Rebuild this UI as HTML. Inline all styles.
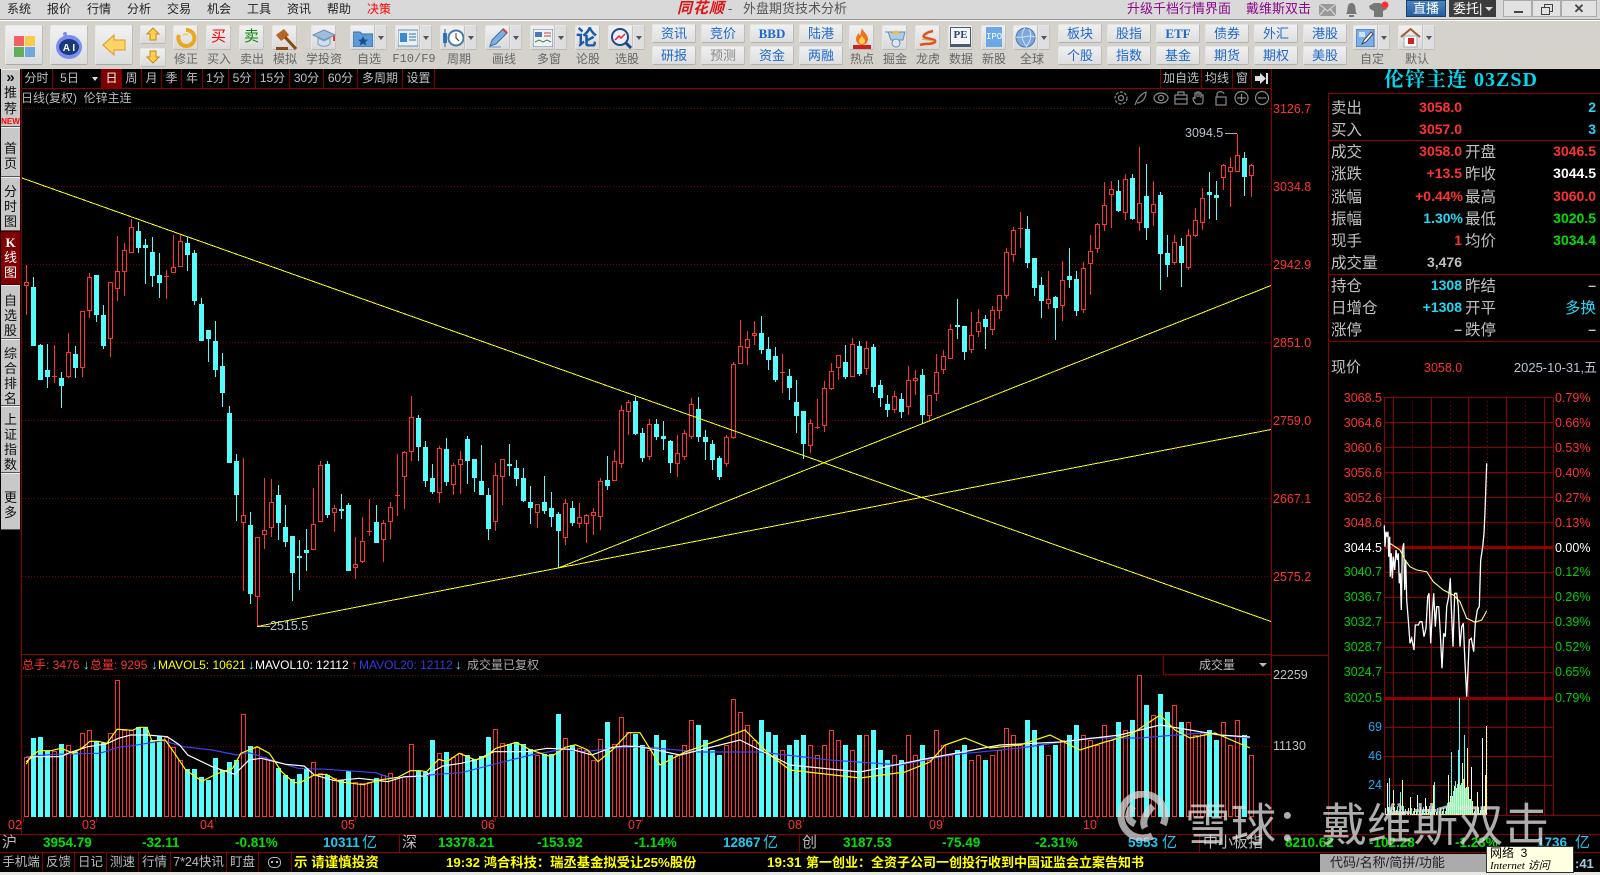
<!DOCTYPE html>
<html lang="zh"><head><meta charset="utf-8"><title>同花顺 - 外盘期货技术分析</title>
<style>
html,body{margin:0;padding:0;background:#000;overflow:hidden}
#r{position:relative;width:1600px;height:875px;overflow:hidden;background:#000;font:12px "Liberation Sans","WenQuanYi Zen Hei","Noto Sans CJK SC",sans-serif;color:#c0c0c0}
#r div,#r span,#r svg{position:absolute;white-space:nowrap}
.t{line-height:16px;height:16px}
.m{top:1px;color:#222;font-size:12px}
.l{top:51px;color:#666;font-size:12px;transform:translateX(-50%)}
.b{top:25px;height:25px;width:25px;box-sizing:border-box;background:linear-gradient(#f1f1f1,#dadada);border:1px solid #e6e6e6;border-bottom:1px solid #b8b8b8;border-right:1px solid #c4c4c4;border-radius:2px}
.d{top:25px;height:25px;width:12px;box-sizing:border-box;background:#dedede;border:1px solid #e6e6e6;border-bottom:1px solid #b8b8b8;border-right:1px solid #c4c4c4}
.d:after{content:"";position:absolute;left:2px;top:10px;border:3.5px solid transparent;border-top:4px solid #555}
.B{top:25px;height:40px;width:38px;box-sizing:border-box;background:linear-gradient(#f2f2f2,#dcdcdc);border:1px solid #e8e8e8;border-bottom:1px solid #aaa;border-right:1px solid #bbb;border-radius:2px}
.x{height:19px;width:44px;box-sizing:border-box;background:linear-gradient(#f0f0f0,#dedede);border:1px solid #e4e4e4;border-bottom:1px solid #b0b0b0;border-right:1px solid #bbb;border-radius:2px;color:#1c68cc;font-size:13px;line-height:17px;text-align:center}
.c{top:69px;height:19px;border-right:1px solid #800000;color:#c0c0c0;text-align:center;line-height:19px;font-size:12px;box-sizing:border-box}
.s{left:1px;width:19px;background:#c8c8c8;color:#111;text-align:center;font-size:13px;line-height:15px;white-space:normal!important;box-sizing:border-box;border-bottom:1px solid #555;border-top:1px solid #eee}
.a{color:#ff3232;font-size:12.5px;line-height:14px;height:14px}
.p{font-size:15.5px;color:#c0c0c0;line-height:18px;height:18px;letter-spacing:0;transform:translateY(2px)}
.v{font-size:14px;font-weight:bold;line-height:18px;height:18px;text-align:right}
.q{font-size:12.5px;line-height:14px;height:14px}
.n{top:835px;font-size:13.5px;font-weight:bold;color:#00e000;line-height:16px;height:16px}
.y{top:835px;font-size:13.5px;font-weight:bold;color:#1fc8f0;line-height:16px;height:16px}
.f{top:853px;height:19px;border-right:1px solid #800000;color:#bbb;font-size:12.5px;line-height:19px;text-align:center;box-sizing:border-box}
.k{top:854px;color:#ff0;font-size:13.5px;font-weight:bold;line-height:17px}
.h{top:657px;line-height:16px;font-size:12px}
.h.u{font-weight:bold;font-size:13px}
</style></head><body><div id="r">

<!-- title bar -->
<div style="left:0;top:0;width:1600px;height:19px;background:#d9d9d9"></div>
<div style="left:0;top:19px;width:1600px;height:1px;background:#8f8f8f"></div>
<div style="left:0;top:20px;width:1600px;height:49px;background:#d5d2cb;border-top:1px solid #fff;box-sizing:border-box"></div>
<span class="t m" style="left:7px">系统</span><span class="t m" style="left:47px">报价</span><span class="t m" style="left:87px">行情</span><span class="t m" style="left:127px">分析</span><span class="t m" style="left:167px">交易</span><span class="t m" style="left:207px">机会</span><span class="t m" style="left:247px">工具</span><span class="t m" style="left:287px">资讯</span><span class="t m" style="left:327px">帮助</span><span class="t m" style="left:367px;color:#f00">决策</span>
<span class="t" style="left:677px;top:1px;color:#e01212;font-size:15px;font-weight:bold;font-style:italic;letter-spacing:1px">同花顺</span>
<span class="t" style="left:728px;top:1px;color:#555;font-size:13px">-</span>
<span class="t" style="left:743px;top:1px;color:#555;font-size:13px">外盘期货技术分析</span>
<span class="t" style="left:1127px;top:1px;color:#8a0a8a;font-size:13px">升级千档行情界面</span>
<span class="t" style="left:1246px;top:1px;color:#8a0a8a;font-size:13px">戴维斯双击</span>
<svg style="left:1319px;top:1px" width="72" height="16"><rect x="0" y="3" width="17" height="12" fill="#999"/><path d="M0 3L8.500 10L17 3M0 15L6 8M17 15L11 8" stroke="#ddd" fill="none"/><path d="M27 13c2-2 1-6 2-8c1-4 6-4 7 0c1 2 0 6 2 8z M30 14h5v2h-5z" fill="#777"/><path d="M50 5l5-3h6l5 3l2 3l-4 2v6H55v-6l-4-2z" fill="#777"/><circle cx="66" cy="4" r="3.500" fill="#f33"/></svg>
<div style="left:1406px;top:0;width:40px;height:17px;background:linear-gradient(#4f86bd,#235d9c);border:1px solid #1a3f6a;box-sizing:border-box;color:#fff;text-align:center;font-size:13px;line-height:15px">直播</div>
<div style="left:1449px;top:0;width:47px;height:17px;background:#3c3c3c;box-sizing:border-box;color:#fff;font-size:13px;line-height:17px;padding-left:4px">委托 <span style="left:30px;top:0">|</span><span style="left:36px;top:7px;border:4px solid transparent;border-top:4px solid #ddd"></span></div>
<div style="left:1503px;top:0;width:29px;height:17px;background:#e2e2e2;border:1px solid #aaa;box-sizing:border-box"><span style="left:10px;top:10px;width:9px;height:2px;background:#444"></span></div>
<div style="left:1532px;top:0;width:29px;height:17px;background:#e2e2e2;border:1px solid #aaa;box-sizing:border-box"><span style="left:11px;top:3px;width:7px;height:6px;border:1px solid #444"></span><span style="left:8px;top:6px;width:7px;height:6px;border:1px solid #444;background:#e2e2e2"></span></div>
<div style="left:1561px;top:0;width:36px;height:17px;background:#e2e2e2;border:1px solid #aaa;box-sizing:border-box;color:#444;text-align:center;line-height:15px;font-weight:bold;font-size:13px">✕</div>

<!-- toolbar -->
<div class="B" style="left:5px"></div>
<svg style="left:14px;top:36px" width="21" height="21"><rect x="0" y="0" width="10" height="10" fill="#f26060"/><rect x="11" y="0" width="10" height="10" fill="#f8cc4a"/><rect x="0" y="11" width="10" height="10" fill="#5fae5a"/><rect x="11" y="11" width="10" height="10" fill="#6fa8dc"/></svg>
<div class="B" style="left:50px"></div>
<svg style="left:54px;top:30px" width="30" height="30"><ellipse cx="15" cy="17" rx="13" ry="12" fill="#7a8df0"/><ellipse cx="15" cy="17" rx="10" ry="8" fill="#1d3a78"/><circle cx="11" cy="4" r="2" fill="#7a8df0"/><text x="15" y="21" fill="#fff" font-size="10" font-weight="bold" text-anchor="middle" font-family="Liberation Sans">A I</text></svg>
<div class="B" style="left:95px"></div>
<svg style="left:102px;top:33px" width="24" height="24"><path d="M1 12L12 2V7H23V17H12V22Z" fill="#ffd466" stroke="#d89a20"/></svg>
<div class="b" style="left:140px;width:26px;height:19px"></div>
<svg style="left:146px;top:27px" width="14" height="14"><path d="M7 1L13 7H10V13H4V7H1Z" fill="#ffd050" stroke="#c88a10"/></svg>
<div class="b" style="left:140px;top:48px;width:26px;height:19px"></div>
<svg style="left:146px;top:50px" width="14" height="14"><path d="M7 13L13 7H10V1H4V7H1Z" fill="#ffd050" stroke="#c88a10"/></svg>

<div class="b" style="left:173px"></div><svg style="left:175px;top:27px" width="22" height="22"><path d="M11 3a8 8 0 1 1-7 5" fill="none" stroke="#e8a820" stroke-width="4"/><path d="M8 8a4 4 0 0 1 5 0" fill="none" stroke="#f4cf70" stroke-width="2"/></svg><span class="l t" style="left:186px">修正</span>
<div class="b" style="left:206px"></div><span class="t" style="left:211px;top:29px;color:#f00;font-size:15px;line-height:16px">买</span><span class="l t" style="left:219px">买入</span>
<div class="b" style="left:239px"></div><span class="t" style="left:244px;top:29px;color:#0a8a0a;font-size:15px;line-height:16px">卖</span><span class="l t" style="left:252px">卖出</span>
<div class="b" style="left:272px"></div><svg style="left:274px;top:27px" width="24" height="24"><path d="M2 8l8-6l5 6l-8 6z" fill="#b5651d"/><path d="M11 10l11 12" stroke="#8a4a12" stroke-width="3"/><rect x="2" y="20" width="12" height="3" fill="#8a4a12"/></svg><span class="l t" style="left:285px">模拟</span>
<div class="b" style="left:311px"></div><svg style="left:312px;top:29px" width="24" height="20"><path d="M12 1L23 6L12 11L1 6Z" fill="#9dbfdc" stroke="#6b8eac"/><path d="M6 9v6c3 3 9 3 12 0V9l-6 3z" fill="#cfe0ee" stroke="#7d9cba"/><rect x="21" y="7" width="2" height="5" fill="#e33"/></svg><span class="l t" style="left:324px">学投资</span>
<div class="b" style="left:350px"></div><div class="d" style="left:375px"></div><svg style="left:353px;top:29px" width="20" height="18"><path d="M0 3h7l2 2h11v13H0z" fill="#5b9bd9" stroke="#3a6ea5"/><path d="M10 7l1.5 3.5l3.5.3l-2.7 2.2l1 3.4l-3.3-1.9l-3.3 1.9l1-3.4L5 10.800l3.500-.3z" fill="#1e4a8a"/></svg><span class="l t" style="left:369px">自选</span>
<div class="b" style="left:395px"></div><div class="d" style="left:420px"></div><svg style="left:398px;top:29px" width="20" height="18"><rect x="0" y="1" width="20" height="16" fill="#e8f0f8" stroke="#6b8eac"/><rect x="2" y="4" width="7" height="9" fill="#3a8ad0"/><path d="M11 5h7M11 8h7M11 11h7" stroke="#3a6ea5"/></svg><span class="l t" style="left:414px;font-family:'Liberation Mono'">F10/F9</span>
<div class="b" style="left:440px"></div><div class="d" style="left:465px"></div><svg style="left:442px;top:27px" width="22" height="22"><rect x="1" y="6" width="4" height="10" fill="#2a7fd0"/><path d="M3 2v18" stroke="#2a5a90"/><circle cx="14" cy="11" r="7.500" fill="#fff" stroke="#4a7aa8" stroke-width="2"/><path d="M14 6v5l3 3" stroke="#333" fill="none"/></svg><span class="l t" style="left:459px">周期</span>
<div class="b" style="left:485px"></div><div class="d" style="left:510px"></div><svg style="left:487px;top:27px" width="22" height="22"><path d="M3 19l2-6L16 2l4 4L9 17z" fill="#7db0e0" stroke="#3a6ea5"/><path d="M16 2l4 4" stroke="#e33" stroke-width="2"/><path d="M2 20h12" stroke="#5a9ad0"/></svg><span class="l t" style="left:504px">画线</span>
<div class="b" style="left:530px"></div><div class="d" style="left:555px"></div><svg style="left:533px;top:29px" width="20" height="18"><rect x="0" y="0" width="20" height="18" fill="#eef2f8" stroke="#5a7a9a"/><rect x="2" y="3" width="7" height="5" fill="#4a7ab0"/><path d="M11 4h7M11 7h7" stroke="#c44"/><path d="M2 13l4-2l4 2l4-2l4 2" stroke="#3a8a3a" fill="none"/></svg><span class="l t" style="left:549px">多窗</span>
<div class="b" style="left:575px"></div><span class="t" style="left:576px;top:29px;color:#1a5aa8;font-size:21px;font-weight:bold;line-height:19px">论</span><span class="l t" style="left:588px">论股</span>
<div class="b" style="left:608px"></div><div class="d" style="left:633px"></div><svg style="left:610px;top:27px" width="22" height="22"><circle cx="10" cy="10" r="8" fill="#eef" stroke="#1e4a8a" stroke-width="2"/><path d="M15 15l6 6" stroke="#1e4a8a" stroke-width="3"/><path d="M5 13l4-4l2 2l4-4" stroke="#e22" stroke-width="1.500" fill="none"/></svg><span class="l t" style="left:627px">选股</span>

<div class="x" style="left:652px;top:24px">资讯</div><div class="x" style="left:652px;top:46px">研报</div>
<div class="x" style="left:701px;top:24px">竞价</div><div class="x" style="left:701px;top:46px;color:#888">预测</div>
<div class="x" style="left:750px;top:24px;font-weight:bold;font-family:'Liberation Serif'">BBD</div><div class="x" style="left:750px;top:46px">资金</div>
<div class="x" style="left:799px;top:24px">陆港</div><div class="x" style="left:799px;top:46px">两融</div>

<div class="b" style="left:849px"></div><svg style="left:852px;top:27px" width="20" height="22"><path d="M10 1c1 4 6 6 6 11a6 6 0 0 1-12 0c0-3 2-4 2-6c1 1 2 2 2 3c1-3 1-5 2-8z" fill="#f07020"/><path d="M10 8c0 3 3 3 3 6a3 3 0 0 1-6 0c0-3 3-3 3-6z" fill="#ffd050"/><rect x="1" y="18" width="18" height="4" fill="#c22"/></svg><span class="l t" style="left:862px">热点</span>
<div class="b" style="left:882px"></div><svg style="left:884px;top:29px" width="22" height="20"><path d="M1 3h3l3 8h12l2-8z" fill="#b0ccea" stroke="#6b8eac"/><path d="M7 5l5-4l5 4z" fill="#f0c040"/><circle cx="12" cy="14" r="4" fill="#dde8f4" stroke="#6b8eac"/></svg><span class="l t" style="left:895px">掘金</span>
<div class="b" style="left:915px"></div><svg style="left:917px;top:28px" width="22" height="20"><path d="M3 17c5-2 12 0 15-3c2-3-8-3-11-5c-2-2 4-5 9-6" fill="none" stroke="#d9541e" stroke-width="2.500"/><path d="M5 11c3 1 8 1 12 2" fill="none" stroke="#f0a030"/></svg><span class="l t" style="left:928px">龙虎</span>
<div class="b" style="left:948px"></div><div style="left:950px;top:27px;width:21px;height:20px;background:#f4f6f8;border:1px solid #4a5a70;border-bottom:3px solid #4a5a70;box-sizing:border-box;color:#2c4a70;font:bold 11px 'Liberation Serif';line-height:15px;text-align:center">PE</div><span class="l t" style="left:961px">数据</span>
<div class="b" style="left:981px"></div><div style="left:986px;top:27px;width:16px;height:20px;background:#6aa8ea;box-sizing:border-box;color:#fff;font:9px 'Liberation Mono';line-height:20px;text-align:center">IPO</div><span class="l t" style="left:994px">新股</span>
<div class="b" style="left:1013px"></div><div class="d" style="left:1038px"></div><svg style="left:1015px;top:27px" width="21" height="21"><circle cx="10.500" cy="10.500" r="9.500" fill="#7ea8dc" stroke="#4a78b0"/><path d="M1 10c6 2 12-3 19 0M10 1c-5 6-3 13 2 19M14 2c3 5 2 12-3 18" stroke="#d0e0f4" fill="none"/></svg><span class="l t" style="left:1032px">全球</span>

<div class="x" style="left:1058px;top:24px">板块</div><div class="x" style="left:1058px;top:46px">个股</div>
<div class="x" style="left:1107px;top:24px">股指</div><div class="x" style="left:1107px;top:46px">指数</div>
<div class="x" style="left:1156px;top:24px;font-weight:bold;font-family:'Liberation Serif'">ETF</div><div class="x" style="left:1156px;top:46px">基金</div>
<div class="x" style="left:1205px;top:24px">债券</div><div class="x" style="left:1205px;top:46px">期货</div>
<div class="x" style="left:1254px;top:24px">外汇</div><div class="x" style="left:1254px;top:46px">期权</div>
<div class="x" style="left:1303px;top:24px">港股</div><div class="x" style="left:1303px;top:46px">美股</div>

<div class="b" style="left:1353px"></div><div class="d" style="left:1378px"></div><svg style="left:1356px;top:29px" width="19" height="18"><rect x="0" y="0" width="18" height="18" fill="#7db0e8" stroke="#3a6ea5"/><rect x="3" y="3" width="6" height="5" fill="#d0e2f6"/><path d="M6 15l2-4l7-8l2 2l-7 8z" fill="#fff" stroke="#445"/></svg><span class="l t" style="left:1372px">自定</span>
<div class="b" style="left:1398px"></div><div class="d" style="left:1423px"></div><svg style="left:1400px;top:27px" width="21" height="21"><path d="M1 10L10.500 2L20 10" fill="none" stroke="#9a5a3a" stroke-width="2"/><rect x="4" y="9" width="13" height="11" fill="#f8f8f8" stroke="#aaa"/><rect x="8" y="11" width="6" height="6" fill="#c22"/></svg><span class="l t" style="left:1417px">默认</span>

<!-- sidebar -->
<div class="s" style="top:69px;height:58px;font-size:13px;line-height:16px"><b style="font-size:15px;line-height:15px;display:block">»</b>推<br>荐<br><b style="font-size:8px;color:#f00;line-height:9px;display:block">NEW</b></div>
<div class="s" style="top:127px;height:50px;padding-top:13px">首<br>页</div>
<div class="s" style="top:177px;height:54px;padding-top:6px;line-height:15px">分<br>时<br>图</div>
<div class="s" style="top:231px;height:54px;padding-top:3px;background:#800000;color:#fff;border-color:#400"><b style="font-family:'Liberation Serif'">K</b><br>线<br>图</div>
<div class="s" style="top:285px;height:54px;padding-top:7px">自<br>选<br>股</div>
<div class="s" style="top:339px;height:67px;padding-top:6px">综<br>合<br>排<br>名</div>
<div class="s" style="top:406px;height:67px;padding-top:5px">上<br>证<br>指<br>数</div>
<div class="s" style="top:473px;height:57px;padding-top:16px">更<br>多</div>

<!-- period tabs -->
<div class="c" style="left:21px;width:32px">分时</div>
<div class="c" style="left:53px;width:49px;padding-right:15px">5日<span style="left:39px;top:8px;border:3.500px solid transparent;border-top:4px solid #ddd"></span></div>
<div class="c" style="left:102px;width:20px;background:#800000;color:#fff">日</div>
<div class="c" style="left:122px;width:20px">周</div><div class="c" style="left:142px;width:20px">月</div><div class="c" style="left:162px;width:20px">季</div><div class="c" style="left:182px;width:21px">年</div>
<div class="c" style="left:203px;width:26px">1分</div><div class="c" style="left:229px;width:27px">5分</div><div class="c" style="left:256px;width:34px">15分</div><div class="c" style="left:290px;width:34px">30分</div><div class="c" style="left:324px;width:34px">60分</div><div class="c" style="left:358px;width:45px">多周期</div><div class="c" style="left:403px;width:32px">设置</div>
<div class="c" style="left:1160px;width:42px;border-left:1px solid #800000">加自选</div><div class="c" style="left:1202px;width:31px">均线</div><div class="c" style="left:1233px;width:19px">窗</div>
<div class="c" style="left:1252px;width:20px"></div>
<svg style="left:1254px;top:73px" width="15" height="11"><path d="M1 3h5V0l6 5.500l-6 5.500V8H1z" fill="#ddd"/><rect x="12" y="0" width="2" height="11" fill="#ddd"/></svg>
<span class="t" style="left:21px;top:90px;color:#bbb">日线(复权)&nbsp; 伦锌主连</span>

<!-- chart svg -->
<svg id="g" style="left:0;top:0" width="1600" height="875" viewBox="0 0 1600 875"></svg>

<svg style="left:1114px;top:90px" width="156" height="16" fill="none" stroke="#8a8a8a" stroke-width="1.200"><circle cx="7" cy="8" r="2.500"/><circle cx="7" cy="8" r="6" stroke-dasharray="3 1.500"/><path d="M21 15c2-6 6-11 11-13c0 6-4 11-9 11"/><ellipse cx="47" cy="8" rx="7" ry="5"/><circle cx="47" cy="8" r="2.500"/><rect x="61" y="5" width="12" height="9"/><path d="M64 5V2h6v3M61 9h12"/><path d="M82 14c-2-2-3-4-3-6c1-1 2 0 2 1V3h2v4V2h2v5V3h2v5V5h2v6c0 2-1 3-2 3z"/><rect x="102" y="7" width="10" height="8"/><path d="M103 7V4c0-3 7-3 7 0"/><circle cx="127.500" cy="8" r="6.500"/><path d="M123 8h9M127.500 4v8"/><circle cx="148" cy="8" r="6.500"/><path d="M144 8h8"/></svg>

<!-- main axis labels -->
<span class="a" style="left:1273px;top:102px">3126.7</span><span class="a" style="left:1273px;top:180px">3034.8</span><span class="a" style="left:1273px;top:258px">2942.9</span><span class="a" style="left:1273px;top:336px">2851.0</span><span class="a" style="left:1273px;top:414px">2759.0</span><span class="a" style="left:1273px;top:492px">2667.1</span><span class="a" style="left:1273px;top:570px">2575.2</span>
<span class="a" style="left:1273px;top:668px;color:#c0c0c0">22259</span><span class="a" style="left:1273px;top:739px;color:#c0c0c0">11130</span>
<span class="t" style="left:1185px;top:125px;color:#b8c4d0;font-size:12.5px">3094.5</span>
<span class="t" style="left:270px;top:618px;color:#b8c4d0;font-size:12.5px">2515.5</span>

<!-- volume header -->
<span class="h" style="left:22px;color:#ff3232">总手: 3476</span><span class="h u" style="left:83px;color:#4ff">↓</span><span class="h" style="left:90px;color:#ff3232">总量: 9295</span><span class="h u" style="left:151px;color:#4ff">↓</span><span class="h" style="left:158px;color:#ff0">MAVOL5: 10621</span><span class="h u" style="left:248px;color:#4ff">↓</span><span class="h" style="left:255px;color:#fff">MAVOL10: 12112</span><span class="h u" style="left:351px;color:#ff3232">↑</span><span class="h" style="left:359px;color:#3838e0">MAVOL20: 12112</span><span class="h u" style="left:455px;color:#4ff">↓</span><span class="h" style="left:467px;color:#aaa">成交量已复权</span>
<div style="left:1163px;top:654px;width:109px;height:21px;border-left:1px solid #800000;border-bottom:1px solid #800000;box-sizing:border-box"></div>
<span class="t" style="left:1199px;top:657px;color:#bbb">成交量</span><span style="left:1259px;top:663px;border:4px solid transparent;border-top:4px solid #bbb"></span>

<!-- x axis -->
<span class="t" style="left:8px;top:817px;color:#ff3232;font-size:12.5px">02</span><span class="t" style="left:82px;top:817px;color:#ff3232;font-size:12.5px">03</span><span class="t" style="left:200px;top:817px;color:#ff3232;font-size:12.5px">04</span><span class="t" style="left:341px;top:817px;color:#ff3232;font-size:12.5px">05</span><span class="t" style="left:481px;top:817px;color:#ff3232;font-size:12.5px">06</span><span class="t" style="left:628px;top:817px;color:#ff3232;font-size:12.5px">07</span><span class="t" style="left:788px;top:817px;color:#ff3232;font-size:12.5px">08</span><span class="t" style="left:929px;top:817px;color:#ff3232;font-size:12.5px">09</span><span class="t" style="left:1083px;top:817px;color:#ff3232;font-size:12.5px">10</span>

<!-- quote panel -->
<span style="left:1331px;top:69px;width:260px;text-align:center;color:#00d8f0;font:bold 20px/23px 'Liberation Serif','Noto Serif CJK SC',serif;letter-spacing:1px">伦锌主连 03ZSD</span>
<span class="p" style="left:1331px;top:98px">卖出</span><span class="v" style="right:138px;top:98px;color:#ff3232">3058.0</span><span class="v" style="right:4px;top:98px;color:#1fd9f5">2</span>
<span class="p" style="left:1331px;top:120px">买入</span><span class="v" style="right:138px;top:120px;color:#ff3232">3057.0</span><span class="v" style="right:4px;top:120px;color:#1fd9f5">3</span>
<span class="p" style="left:1331px;top:142px">成交</span><span class="v" style="right:138px;top:142px;color:#ff3232">3058.0</span><span class="p" style="left:1465px;top:142px">开盘</span><span class="v" style="right:4px;top:142px;color:#ff3232">3046.5</span>
<span class="p" style="left:1331px;top:164px">涨跌</span><span class="v" style="right:138px;top:164px;color:#ff3232">+13.5</span><span class="p" style="left:1465px;top:164px">昨收</span><span class="v" style="right:4px;top:164px;color:#fff">3044.5</span>
<span class="p" style="left:1331px;top:187px">涨幅</span><span class="v" style="right:137px;top:187px;color:#ff3232">+0.44%</span><span class="p" style="left:1465px;top:187px">最高</span><span class="v" style="right:4px;top:187px;color:#ff3232">3060.0</span>
<span class="p" style="left:1331px;top:209px">振幅</span><span class="v" style="right:137px;top:209px;color:#1fd9f5">1.30%</span><span class="p" style="left:1465px;top:209px">最低</span><span class="v" style="right:4px;top:209px;color:#00e000">3020.5</span>
<span class="p" style="left:1331px;top:231px">现手</span><span class="v" style="right:138px;top:231px;color:#ff3232">1</span><span class="p" style="left:1465px;top:231px">均价</span><span class="v" style="right:4px;top:231px;color:#00e000">3034.4</span>
<span class="p" style="left:1331px;top:253px">成交量</span><span class="v" style="right:138px;top:253px;color:#c0c0c0">3,476</span>
<span class="p" style="left:1331px;top:276px">持仓</span><span class="v" style="right:138px;top:276px;color:#1fd9f5">1308</span><span class="p" style="left:1465px;top:276px">昨结</span><span class="v" style="right:4px;top:276px;color:#c0c0c0">–</span>
<span class="p" style="left:1331px;top:298px">日增仓</span><span class="v" style="right:138px;top:298px;color:#1fd9f5">+1308</span><span class="p" style="left:1465px;top:298px">开平</span><span class="p" style="right:4px;top:298px;color:#1fd9f5">多换</span>
<span class="p" style="left:1331px;top:320px">涨停</span><span class="v" style="right:138px;top:320px;color:#c0c0c0">–</span><span class="p" style="left:1465px;top:320px">跌停</span><span class="v" style="right:4px;top:320px;color:#c0c0c0">–</span>
<span class="t" style="left:1331px;top:360px;font-size:15px">现价</span><span class="t" style="left:1424px;top:360px;color:#ff3232;font-size:12.5px">3058.0</span><span class="t" style="right:3px;top:360px;color:#b8c4d0;font-size:13px">2025-10-31,五</span>

<!-- mini chart labels -->
<span class="q" style="right:218px;top:391px;color:#ff3232">3068.5</span><span class="q" style="right:218px;top:416px;color:#ff3232">3064.6</span><span class="q" style="right:218px;top:441px;color:#ff3232">3060.6</span><span class="q" style="right:218px;top:466px;color:#ff3232">3056.6</span><span class="q" style="right:218px;top:491px;color:#ff3232">3052.6</span><span class="q" style="right:218px;top:516px;color:#ff3232">3048.6</span><span class="q" style="right:218px;top:541px;color:#fff">3044.5</span><span class="q" style="right:218px;top:565px;color:#00d000">3040.7</span><span class="q" style="right:218px;top:590px;color:#00d000">3036.7</span><span class="q" style="right:218px;top:615px;color:#00d000">3032.7</span><span class="q" style="right:218px;top:640px;color:#00d000">3028.7</span><span class="q" style="right:218px;top:665px;color:#00d000">3024.7</span><span class="q" style="right:218px;top:691px;color:#00d000">3020.5</span>
<span class="q" style="right:218px;top:720px;color:#1fa8f0">69</span><span class="q" style="right:218px;top:749px;color:#1fa8f0">46</span><span class="q" style="right:218px;top:778px;color:#1fa8f0">24</span>
<span class="q" style="left:1555px;top:391px;color:#ff3232">0.79%</span><span class="q" style="left:1555px;top:416px;color:#ff3232">0.66%</span><span class="q" style="left:1555px;top:441px;color:#ff3232">0.53%</span><span class="q" style="left:1555px;top:466px;color:#ff3232">0.40%</span><span class="q" style="left:1555px;top:491px;color:#ff3232">0.27%</span><span class="q" style="left:1555px;top:516px;color:#ff3232">0.13%</span><span class="q" style="left:1555px;top:541px;color:#fff">0.00%</span><span class="q" style="left:1555px;top:565px;color:#00d000">0.12%</span><span class="q" style="left:1555px;top:590px;color:#00d000">0.26%</span><span class="q" style="left:1555px;top:615px;color:#00d000">0.39%</span><span class="q" style="left:1555px;top:640px;color:#00d000">0.52%</span><span class="q" style="left:1555px;top:665px;color:#00d000">0.65%</span><span class="q" style="left:1555px;top:691px;color:#00d000">0.79%</span>

<!-- index row -->
<span class="t" style="left:2px;top:835px;font-size:15px;color:#bbb">沪</span><span class="n" style="left:43px">3954.79</span><span class="n" style="left:142px">-32.11</span><span class="n" style="left:235px">-0.81%</span><span class="y" style="left:323px">10311</span><span class="t" style="left:362px;top:835px;font-size:15px;color:#1fc8f0">亿</span>
<span class="t" style="left:402px;top:835px;font-size:15px;color:#bbb">深</span><span class="n" style="left:438px">13378.21</span><span class="n" style="left:537px">-153.92</span><span class="n" style="left:634px">-1.14%</span><span class="y" style="left:723px">12867</span><span class="t" style="left:763px;top:835px;font-size:15px;color:#1fc8f0">亿</span>
<span class="t" style="left:802px;top:835px;font-size:15px;color:#bbb">创</span><span class="n" style="left:843px">3187.53</span><span class="n" style="left:942px">-75.49</span><span class="n" style="left:1035px">-2.31%</span><span class="y" style="left:1128px">5953</span><span class="t" style="left:1162px;top:835px;font-size:15px;color:#1fc8f0">亿</span>
<span class="t" style="left:1203px;top:835px;font-size:15px;color:#bbb">中小板指</span><span class="n" style="left:1285px">8210.62</span><span class="n" style="left:1369px">-102.28</span><span class="n" style="left:1455px">-1.23%</span><span class="y" style="left:1537px">1736</span><span class="t" style="left:1575px;top:835px;font-size:15px;color:#1fc8f0">亿</span>

<!-- bottom tabs -->
<div class="f" style="left:0;width:43px">手机端</div><div class="f" style="left:43px;width:32px">反馈</div><div class="f" style="left:75px;width:32px">日记</div><div class="f" style="left:107px;width:32px">测速</div><div class="f" style="left:139px;width:32px">行情</div><div class="f" style="left:171px;width:56px">7*24快讯</div><div class="f" style="left:227px;width:32px">盯盘</div><div class="f" style="left:259px;width:33px"><span style="left:9px;top:4px;width:13px;height:11px;border:1px solid #bbb;border-radius:5px;box-sizing:border-box"></span><span style="left:12px;top:8px;width:2px;height:2px;background:#bbb"></span><span style="left:17px;top:8px;width:2px;height:2px;background:#bbb"></span></div>
<span class="k" style="left:294px">示 请谨慎投资</span>
<span class="k" style="left:446px;font-size:13.3px">19:32 鸿合科技：瑞丞基金拟受让25%股份</span>
<span class="k" style="left:767px">19:31</span>
<span class="k" style="left:806px;font-size:13px">第一创业：全资子公司一创投行收到中国证监会立案告知书</span>
<div style="left:1320px;top:854px;width:166px;height:18px;background:#ababab;color:#222;font-size:13px;line-height:18px;padding-left:10px;box-sizing:border-box">代码/名称/简拼/功能</div>
<span class="t" style="left:1575px;top:856px;color:#9cd;font-weight:bold;font-size:13px">:41</span>
<div style="left:0;top:872px;width:1600px;height:3px;background:#e8e8e4"></div>

<!-- watermark -->
<svg style="left:1114px;top:791px" width="58" height="50" fill="none" stroke="#d8d8d8" stroke-opacity=".75" stroke-width="7"><circle cx="29" cy="25" r="22" stroke-dasharray="122 16" transform="rotate(65 29 25)"/><path d="M19 15c-6 8-6 14 2 18M39 15c-6 6-12 14-8 22"/></svg>
<span style="left:1185px;top:796px;font-size:45.500px;line-height:52px;color:rgba(222,222,222,.78);font-family:'Noto Sans CJK SC',sans-serif;font-weight:400">雪球：戴维斯双击</span>

<!-- tooltip -->
<div style="left:1486px;top:846px;width:88px;height:27px;background:#ffffe1;border:1px solid #333;box-sizing:border-box;color:#000"><span style="left:3px;top:0;font-size:12px;line-height:13px">网络&nbsp; 3</span><span style="left:3px;top:13px;font:italic 11px/13px 'Liberation Serif','WenQuanYi Zen Hei',serif">Internet 访问</span></div>

<script>
var Z11="r195,247,254,345|c232,261,437,437|c432,435,540,540|c432,510,530,564|r435,529,530,549|c516,534,557,623|r400,457,527,534|c438,462,504,534|r333,334,500,531|r220,232,329,354|c225,225,345,366|c316,345,437,447|r247,247,413,471|r108,214,263,303|r129,151,212,288|r57,82,155,159|c66,93,144,159|c117,135,144,252|c111,156,228,261|c159,225,249,294|r210,229,231,297|r105,202,215,215|r102,124,197,197|c111,129,165,213|c150,159,303,315|c294,312,423,423|c390,390,417,486|c363,423,510,531|c459,498,579,621|c618,639,789,789|c762,783,885,963|r774,946,965,1173|c936,975,1182,1212|r1012,1012,1187,1281|r834,991,1001,1047|r837,906,980,1011|c855,885,969,1020|c915,981,1026,1041|c1008,1008,1119,1203|c1020,1068,1074,1170|c987,1050,1059,1113|r864,973,1046,1046|r783,796,962,962|c783,792,945,954|r915,925,935,996|c882,927,933,957|c909,915,1113,1113|r1011,1093,1100,1137|r951,1024,1082,1089|r897,994,996,1008|c915,966,1029,1029|r960,969,1016,1086|r906,922,964,1017|r762,886,888,948|r753,757,827,927|r588,652,754,783|c645,654,741,783|c723,741,843,861|c792,834,876,882|r738,745,875,909|c714,747,846,858|r789,796,851,885|r753,778,793,882|c708,717,783,852|c777,777,834,876|c735,843,885,885|c864,885,987,1020|r789,826,962,993|r778,778,827,915|c732,792,798,828|c780,804,837,858|c804,834,903,906|c858,906,924,972|r912,913,935,984|c828,906,933,942|c876,924,951,981|c936,942,993,1104|r897,910,1010,1035|c903,924,969,978|r909,952,968,984|r942,946,968,1029|r924,937,944,1005|r834,844,947,990|c768,840,858,870|r750,784,840,843";
var Z12="r825,841,1000,1015|r810,817,842,915|c800,813,912,915|c895,909,985,995|r867,883,977,990|c867,882,921,930|c873,918,927,960|c930,933,1000,1030|r915,970,1000,1040|r900,909,977,990|r804,823,917,927|c801,837,921,936|c900,921,936,990|c930,942,990,1020|c978,985,1040,1050|r915,921,1000,1010|r697,703,921,927|r570,649,698,702|r603,628,650,705|r573,610,614,645|c558,609,660,672|c621,657,690,720|c651,678,750,756|r672,726,729,789|c717,738,774,810|c750,816,858,909|c843,843,942,987|r867,880,944,969|r807,892,895,897|r753,775,884,906|r699,724,774,780|r675,676,712,750|c645,696,741,747|r624,642,738,738|c633,648,732,738|r633,655,715,735|c642,651,771,789|c750,765,804,831|c795,822,840,861|r783,799,836,849|c789,807,846,864|r708,750,827,855|r720,745,749,795|c717,735,855,879|r795,796,854,870|r672,727,788,813|r660,679,716,732|r582,598,683,684|c507,585,587,627|c588,588,666,690|r546,616,656,669|r537,577,602,621|c555,567,591,657|r528,541,596,615|r495,496,539,567|r354,367,494,507|r291,301,371,396|r246,294,298,354|c258,297,399,414|c384,384,474,498|c441,465,513,564|r423,508,518,537|c498,501,534,630|r393,451,524,573|c354,438,450,474|c423,447,543,558|r396,415,536,549|r315,364,398,495|r279,283,353,369|r156,226,283,303|r153,178,191,294|c150,183,243,246|r132,148,245,270|c132,144,267,270|r51,220,275,303|c102,198,294,330|r153,223,245,288|c186,195,372,480|c315,369,405,441|r315,337,395,405|c324,348,399,471|r297,316,411,420|r234,271,315,321|r174,205,275,300|c126,186,195,267|c153,195,204,270|r102,105,140,180|r81,112,122,231";
var C=[];
function add(s,oy){s.split("|").forEach(function(p){var v=p.slice(1).split(",").map(function(n){return Math.round(oy+n/3)});C.push([p[0],v[0],v[1],v[2],v[3]])})}
add(Z11,200);add(Z12,130);
C.push(["r",134,155,171,171],["c",152,158,177,196],["r",164,165,175,197]);
var VA=[350,294,291,332,332,312,316,335,280,270,304,310,280,120,270,270,262,262,300,287,290,320,360,387,387,410,420,354,390,366,360,222,318,320,350,360,385,405,417,402,383,367,400,405,415,420,393,425,430,425,414,405,400,410,410,313,393,396,300,340,336,350,340,346,358,348,291,268,310,312,306,312,326,346,342,342,222,295,314,325,330,360,298,246,313,232,277,282].map(function(v){return Math.round(640+v/3)});
var VB=[745,750,735,740,755,755,745,720,725,740,750,755,745,699,712,725,740,720,732,735,750,745,740,735,745,755,745,730,740,745,750,735,735,730,750,760,755,760,735,755,745,760,730,745,755,750,745,760,755,760,755,750,728,735,745,720,730,745,755,745,740,735,725,735,740,745,725,740,722,730,720,675,705,715,694,712,705,722,722,735,732,730,740,722,745,720,735,755];
var V=VA.concat(VB);
var R="#ff3232",K="#54fcfc",G="#800000",o="";
function rect(x,y,w,h,f){return '<rect x="'+x+'" y="'+y+'" width="'+w+'" height="'+h+'" fill="'+f+'"/>'}
function hl(x1,x2,y,c,d,w){return '<line x1="'+x1+'" x2="'+x2+'" y1="'+(y+.5)+'" y2="'+(y+.5)+'" stroke="'+c+'"'+(d?' stroke-dasharray="'+d+'"':'')+(w?' stroke-width="'+w+'"':'')+'/>'}
function vl(x,y1,y2,c,d){return '<line x1="'+(x+.5)+'" x2="'+(x+.5)+'" y1="'+y1+'" y2="'+y2+'" stroke="'+c+'"'+(d?' stroke-dasharray="'+d+'"':'')+'/>'}
function poly(p,c,w){return '<polyline fill="none" stroke="'+c+'" stroke-width="'+(w||1)+'" points="'+p.map(function(a){return a.join(",")}).join(" ")+'"/>'}
var DR="#8c0000";
o+='<g shape-rendering="crispEdges">';
o+=hl(21,1272,88,DR)+vl(21,69,834,DR)+vl(1271,88,834,DR)+hl(21,1272,654,DR)+hl(0,1600,834,DR)+hl(0,1600,852,DR);
o+=vl(1328,93,834,DR)+hl(1328,1600,93,DR)+hl(1328,1600,140,DR)+hl(1328,1600,274,DR)+hl(1328,1600,341,DR)+hl(1271,1328,655,DR);
o+=vl(399,834,852,DR)+vl(799,834,852,DR)+vl(1199,834,852,DR);
[108,186,264,342,420,498,576,675,746].forEach(function(y){o+=hl(22,1271,y,G,"1 2")});
[23,96,215,355,495,642,803,943,1097].forEach(function(x){o+=vl(x,817,822,DR)});
for(var i=0;i<176;i++){var x=24+7*i,t=V[i],c=C[i];
 if(c[0]=="c")o+=rect(x,t,5,817-t,K);
 else o+='<rect x="'+(x+.5)+'" y="'+(t+.5)+'" width="4" height="'+(816-t)+'" fill="none" stroke="'+R+'"/>';
}
for(var i=0;i<176;i++){var x=24+7*i,c=C[i],col=c[0]=="c"?K:R;
 o+=rect(x+2,c[1],1,Math.max(1,c[4]-c[1]),col);
 if(c[0]=="c")o+=rect(x,c[2],5,Math.max(2,c[3]-c[2]),K);
 else{ if(c[3]-c[2]<2)o+=rect(x,c[2],5,1,R);
  else o+='<rect x="'+(x+.5)+'" y="'+(c[2]+.5)+'" width="4" height="'+(c[3]-c[2])+'" fill="#000" stroke="'+R+'"/>'+rect(x+2,c[1],1,c[2]-c[1],R)+rect(x+2,c[3],1,c[4]-c[3],R);}
}
o+=hl(1225,1237,133,"#aaa")+hl(258,270,626,"#aaa");
o+='<g stroke="#ffff00" fill="none"><line x1="22" y1="178" x2="1271" y2="621.500"/><line x1="257" y1="626.500" x2="1271" y2="429.500"/><line x1="559" y1="567.700" x2="1271" y2="285.500"/></g>';
[397,422,447,472,497,522,572,597,622,647,672].forEach(function(y){o+=hl(1384,1553,y,DR)});
o+=hl(1384,1553,547,DR,"",3)+hl(1384,1553,698,DR,"",3)+hl(1384,1553,727,DR)+hl(1384,1553,756,DR)+hl(1384,1553,785,DR)+hl(1384,1600,815,DR);
o+=vl(1384,397,815,DR)+vl(1553,397,815,DR);
[1393,1431,1468,1506,1544].forEach(function(x){o+=vl(x,397,815,DR)});
[1412,1450,1487,1525].forEach(function(x){o+=vl(x,397,815,"#a00000","1 3")});
o+='</g>';
function zp(a){return a.map(function(p){return [(p[0]/2.45).toFixed(1),(640+p[1]/3).toFixed(1)]})}
var Y=zp([[64,373],[75,350],[95,332],[125,332],[150,325],[180,340],[205,320],[220,304],[240,304],[262,310],[287,268],[325,271],[340,262],[360,262],[372,302],[405,300],[425,335],[455,390],[495,424],[530,402],[570,385],[590,340],[630,320],[660,340],[690,395],[720,428],[735,428],[770,405],[800,403],[830,425],[890,434],[930,420],[975,412],[1005,392],[1030,392],[1045,395],[1075,358],[1095,365],[1125,340],[1165,360],[1190,350],[1215,325],[1265,307],[1300,330],[1350,350],[1385,322],[1410,314],[1440,330],[1465,365],[1500,330],[1540,278],[1568,278]]).concat([[660,765],[685,752],[705,745],[745,730],[770,755],[790,770],[860,778],[905,772],[930,762],[945,745],[965,738],[990,748],[1020,745],[1050,735],[1080,750],[1105,742],[1130,735],[1160,715],[1175,730],[1190,738],[1215,733],[1250,748]]);
var W=zp([[64,365],[80,350],[150,350],[170,338],[215,320],[260,312],[290,295],[320,285],[360,285],[410,290],[440,315],[460,345],[520,380],[575,403],[610,360],[640,355],[700,373],[745,378],[770,405],[820,422],[880,415],[950,425],[990,410],[1040,408],[1085,378],[1130,370],[1170,358],[1210,335],[1250,335],[1290,335],[1340,325],[1400,328],[1450,345],[1500,322],[1530,318],[1568,320]]).concat([[680,755],[740,740],[790,765],[860,772],[930,758],[1000,745],[1060,742],[1120,735],[1160,725],[1220,735],[1250,737]]);
var Bl=zp([[64,350],[130,343],[245,340],[290,322],[330,316],[400,302],[450,320],[520,330],[580,345],[610,338],[660,358],[730,385],[800,388],[920,398],[960,415],[1020,410],[1070,403],[1130,398],[1220,370],[1300,345],[1380,328],[1430,335],[1500,325],[1568,320]]).concat([[700,752],[760,752],[830,760],[900,765],[950,755],[1020,748],[1090,738],[1140,738],[1200,733],[1250,738]]);
o+=poly(Bl,"#4040ff",1.200)+poly(W,"#fff",1.200)+poly(Y,"#ffff00",1.200);
var mv=[[298,1195,K],[290,1210,"#fff"],[508,955,K],[522,1065,K],[482,1115,K],[505,1110,K],[432,1205,K],[475,1185,"#ff8"],[589,1038,"#ff8"],[530,1105,"#ff8"],[337,1200,"#ff8"],[517,1150,"#ff8"],[577,1075,"#fff"],[542,1160,"#fff"],[428,1215,"#ff8"],[360,1250,"#ff8"],[585,1185,"#ff8"],[310,1230,"#ff8"],[330,1235,K],[405,1255,"#fff"],[380,1245,"#fff"],[560,1235,"#ff8"]];
for(var k=285;k<590;k+=3){var nh=(k>470&&k<550)?1305-90*Math.sin((k-470)/80*3.14)-(k*7%17)*2:1305-((k*13)%29);mv.push([k,nh,(k%2)?K:"#ff8"])}
o+='<g shape-rendering="crispEdges">';
mv.forEach(function(m){o+='<rect x="'+(1290+m[0]/3).toFixed(0)+'" y="'+(380+m[1]/3).toFixed(0)+'" width="1" height="'+((1305-m[1])/3).toFixed(0)+'" fill="'+m[2]+'"/>'});
o+='</g>';
function mp(a){return a.map(function(p){return [(1290+p[0]/3).toFixed(1),(380+p[1]/3).toFixed(1)]})}
o+=poly(mp([[283,436],[285,500],[288,455],[291,470],[294,455],[296,530],[299,470],[301,590],[304,520],[307,595],[310,530],[314,570],[318,510],[322,540],[325,520],[328,610],[331,580],[334,690],[337,510],[341,490],[344,630],[347,540],[350,660],[355,720],[360,790],[365,775],[372,810],[376,735],[385,735],[390,725],[396,725],[402,770],[408,745],[413,650],[417,640],[422,790],[427,700],[431,640],[436,740],[440,680],[446,680],[451,760],[456,865],[461,760],[466,770],[470,680],[476,650],[481,595],[484,680],[489,800],[494,640],[500,640],[505,680],[510,800],[515,740],[520,730],[525,850],[530,950],[534,870],[538,780],[544,775],[551,815],[556,730],[562,690],[568,680],[572,540],[578,500],[582,460],[585,395],[588,310],[590,250]]),"#fff",1.300);
o+=poly(mp([[300,490],[330,510],[345,540],[360,560],[380,570],[410,575],[430,605],[460,630],[490,645],[510,665],[530,715],[555,727],[575,720],[590,692]]),"#ffff80",1.100);
document.getElementById("g").innerHTML=o;
</script>
</div></body></html>
